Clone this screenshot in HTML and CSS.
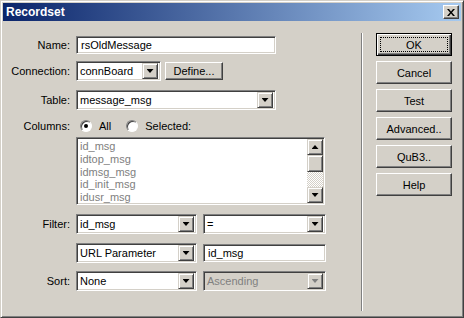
FILE: index.html
```html
<!DOCTYPE html>
<html lang="en">
<head>
	<meta charset="utf-8">
	<title>Recordset</title>
	<link rel="stylesheet" href="styles.css">
</head>
<body>
	<div class="window">
		<div class="titlebar">
			<span class="title">Recordset</span>
			<span class="close">
				<svg width="8" height="7" viewBox="0 0 8 7"><path d="M0 0h2l2 2.5L6 0h2L5 3.5 8 7H6L4 4.5 2 7H0l3-3.5z"/></svg>
			</span>
		</div>
		<div class="client">
			<div class="form">
				<div class="row r-name">
					<span class="lbl">Name:</span>
					<div class="field w-wide">rsOldMessage</div>
				</div>
				<div class="row r-conn">
					<span class="lbl">Connection:</span>
					<div class="combo w-conn"><span class="val">connBoard</span><span class="drop"></span></div>
					<span class="btn btn-define">Define...</span>
				</div>
				<div class="row r-table">
					<span class="lbl">Table:</span>
					<div class="combo w-wide"><span class="val">message_msg</span><span class="drop"></span></div>
				</div>
				<div class="row r-cols">
					<span class="lbl">Columns:</span>
					<span class="radio checked"></span><span class="opt opt-all">All</span>
					<span class="radio"></span><span class="opt">Selected:</span>
				</div>
				<div class="row r-list">
					<span class="lbl"></span>
					<div class="listbox">
						<ul class="items">
							<li>id_msg</li>
							<li>idtop_msg</li>
							<li>idmsg_msg</li>
							<li>id_init_msg</li>
							<li>idusr_msg</li>
						</ul>
						<div class="scroll">
							<span class="sbtn up"></span>
							<span class="thumb"></span>
							<span class="track"></span>
							<span class="sbtn down"></span>
						</div>
					</div>
				</div>
				<div class="row r-filter">
					<span class="lbl">Filter:</span>
					<div class="combo w-half"><span class="val">id_msg</span><span class="drop"></span></div>
					<div class="combo w-half2"><span class="val">=</span><span class="drop"></span></div>
				</div>
				<div class="row r-url">
					<span class="lbl"></span>
					<div class="combo w-half"><span class="val">URL Parameter</span><span class="drop"></span></div>
					<div class="field w-half2">id_msg</div>
				</div>
				<div class="row r-sort">
					<span class="lbl">Sort:</span>
					<div class="combo w-half"><span class="val">None</span><span class="drop"></span></div>
					<div class="combo w-half2 disabled"><span class="val">Ascending</span><span class="drop"></span></div>
				</div>
			</div>
			<div class="sep"></div>
			<div class="buttons">
				<span class="btn btn-side btn-default"><span class="focus">OK</span></span>
				<span class="btn btn-side">Cancel</span>
				<span class="btn btn-side">Test</span>
				<span class="btn btn-side">Advanced..</span>
				<span class="btn btn-side">QuB3..</span>
				<span class="btn btn-side">Help</span>
			</div>
		</div>
	</div>
</body>
</html>
```

FILE: styles.css
```css
html, body {
	margin:0;
	padding:0;
	background:#d4d0c8;
}

body {
	font-family:"Liberation Sans", Arial, sans-serif;
	font-size:11px;
	color:black;
}

.window {
	box-sizing:border-box;
	width:464px;
	height:318px;
	background:#d4d0c8;
	border:1px solid;
	border-color:#d4d0c8 #404040 #404040 #d4d0c8;
	box-shadow:inset 1px 1px #fff, inset -1px -1px #808080;
	padding:2px;
}

.titlebar {
	height:18px;
	display:flex;
	align-items:center;
	justify-content:space-between;
	background:linear-gradient(to right, #0a246a, #a6caf0);
	color:white;
	padding:0 2px 0 2px;
}

.title {
	font-weight:bold;
	font-size:12px;
	padding-left:1px;
}

.close {
	box-sizing:border-box;
	width:16px;
	height:14px;
	background:#d4d0c8;
	border:1px solid;
	border-color:#fff #404040 #404040 #fff;
	box-shadow:inset -1px -1px #808080;
	display:flex;
	align-items:center;
	justify-content:center;
}

.close svg {
	fill:black;
	margin-left:-1px;
}

.client {
	display:flex;
	padding-top:12px;
	margin-left:-1px;
}

.form {
	width:359px;
	display:flex;
	flex-direction:column;
}

.row {
	display:flex;
	align-items:center;
}

.lbl {
	width:68px;
	flex:none;
	text-align:right;
	margin-right:6px;
}

.r-name { margin-top:3px; height:18px; }
.r-conn { margin-top:7px; height:20px; }
.r-table { margin-top:9px; height:20px; }
.r-cols { margin-top:8px; height:16px; }
.r-list { margin-top:3px; height:68px; align-items:flex-start; }
.r-filter { margin-top:9px; height:20px; }
.r-url { margin-top:9px; height:20px; }
.r-sort { margin-top:8px; height:20px; }

/* sunken controls */
.field, .combo, .listbox {
	box-sizing:border-box;
	background:white;
	border:1px solid;
	border-color:#808080 #fff #fff #808080;
	box-shadow:inset 1px 1px #404040, inset -1px -1px #d4d0c8;
}

.field {
	height:18px;
	line-height:16px;
	padding-left:4px;
}

.combo {
	height:20px;
	display:flex;
	align-items:center;
	padding:2px;
}

.combo .val {
	flex:1;
	padding-left:1px;
}

.drop, .sbtn {
	box-sizing:border-box;
	width:16px;
	height:16px;
	background:#d4d0c8;
	border:1px solid;
	border-color:#d4d0c8 #404040 #404040 #d4d0c8;
	box-shadow:inset 1px 1px #fff, inset -1px -1px #808080;
	display:flex;
	align-items:center;
	justify-content:center;
	flex:none;
}

.drop::after, .sbtn.down::after {
	content:"";
	width:7px;
	height:4px;
	background:black;
	clip-path:polygon(0 0, 100% 0, 50% 100%);
}

.sbtn.up::after {
	content:"";
	width:7px;
	height:4px;
	background:black;
	clip-path:polygon(50% 0, 100% 100%, 0 100%);
}

.disabled {
	background:#d4d0c8;
	color:#808080;
}

.disabled .drop::after {
	background:#808080;
}

.w-wide { width:200px; }
.w-conn { width:85px; }
.w-half { width:121px; }
.w-half2 { width:123px; margin-left:6px; }

/* raised buttons */
.btn {
	box-sizing:border-box;
	display:flex;
	align-items:center;
	justify-content:center;
	background:#d4d0c8;
	border:1px solid;
	border-color:#fff #404040 #404040 #fff;
	box-shadow:inset -1px -1px #808080;
}

.btn-define {
	width:58px;
	height:18px;
	margin-left:4px;
	margin-top:-1px;
}

.radio {
	box-sizing:border-box;
	width:12px;
	height:12px;
	border-radius:50%;
	background:white;
	border:1px solid;
	border-color:#808080 #fff #fff #808080;
	box-shadow:inset 1px 1px #404040;
	display:flex;
	align-items:center;
	justify-content:center;
	margin-left:4px;
}

.radio.checked::after {
	content:"";
	width:4px;
	height:4px;
	border-radius:50%;
	background:black;
}

.opt {
	margin-left:7px;
}

.opt-all {
	margin-right:15px;
}

.r-cols .radio + .opt + .radio {
	margin-left:0;
}

.listbox {
	width:249px;
	height:68px;
	display:flex;
	padding:1px 1px 1px 2px;
}

.items {
	list-style:none;
	margin:0;
	padding:1px 0 0 1px;
	flex:1;
	color:#808080;
	line-height:12.75px;
	height:64px;
	overflow:hidden;
}

.scroll {
	width:16px;
	display:flex;
	flex-direction:column;
}

.thumb {
	box-sizing:border-box;
	height:17px;
	background:#d4d0c8;
	border:1px solid;
	border-color:#d4d0c8 #404040 #404040 #d4d0c8;
	box-shadow:inset 1px 1px #fff, inset -1px -1px #808080;
}

.track {
	flex:1;
	background:repeating-conic-gradient(#d4d0c8 0 25%, #fff 0 50%) 0 0/2px 2px;
}

.sep {
	width:1px;
	height:278px;
	background:#808080;
	border-right:1px solid #fff;
	margin-top:0;
}

.buttons {
	margin-left:13px;
	display:flex;
	flex-direction:column;
	gap:5px;
}

.btn-side {
	width:76px;
	height:23px;
}

.btn-default {
	border:1px solid black;
	box-shadow:inset 1px 1px #fff, inset -1px -1px #404040, inset -2px -2px #808080;
	padding:3px;
}

.focus {
	box-sizing:border-box;
	width:100%;
	height:100%;
	border:1px dotted black;
	display:flex;
	align-items:center;
	justify-content:center;
}
```
